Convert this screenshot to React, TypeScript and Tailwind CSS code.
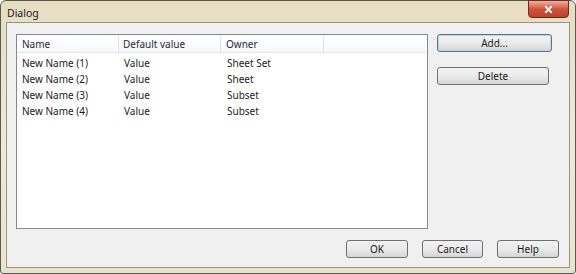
import { X } from "lucide-react";

const rows = [
    { name: "New Name (1)", value: "Value", owner: "Sheet Set" },
    { name: "New Name (2)", value: "Value", owner: "Sheet" },
    { name: "New Name (3)", value: "Value", owner: "Subset" },
    { name: "New Name (4)", value: "Value", owner: "Subset" },
];

const Button = ({ label, className = "" }: { label: string; className?: string }) => (
    <button
        className={`h-[18px] rounded-[3px] border border-[#707070] bg-gradient-to-b from-[#f2f2f2] via-[#ebebeb] to-[#d6d6d6] text-[10px] leading-none text-[#1b1b1b] ${className}`}
    >
        {label}
    </button>
);

export default function App() {
    return (
        <div className="w-[576px] h-[274px] bg-white">
            <div
                className="w-[576px] h-[274px] flex flex-col border border-[#5a5a5a] rounded-t-[6px] rounded-b-[3px] bg-gradient-to-b from-[#e6ddc1] via-[#efe9d6] to-[#ebe3c9] px-[5px] pb-[5px] text-[#1b1b1b]"
                style={{ fontFamily: '"Noto Sans", "Open Sans", sans-serif' }}
            >
                <div className="h-[21px] flex items-start justify-between">
                    <span className="pl-[1px] pt-[6px] text-[10.5px] leading-[12px]">Dialog</span>
                    <div className="mt-[-1px] mr-[1px] w-[41px] h-[18px] rounded-b-[4px] border border-[#6e2a20] bg-gradient-to-b from-[#eeb1a2] via-[#d0543c] to-[#c2402a] flex items-center justify-center">
                        <X size={11} strokeWidth={4} className="text-white" />
                    </div>
                </div>

                <div className="flex-1 flex flex-col border border-[#9c957f] bg-[#f0f0f0] pl-[9px] pr-[10px] pt-[11px] pb-[9px]">
                    <div className="flex-1 flex">
                        <div className="w-[412px] h-[195px] border border-[#828790] bg-white">
                            <div className="h-[18px] flex border-b border-[#e5e5e5] bg-gradient-to-b from-white to-[#f7f8fa] text-[10px] leading-none text-[#1e2a3a]">
                                <div className="w-[102px] pl-[5px] flex items-center border-r border-[#dfe1e5]">Name</div>
                                <div className="w-[102px] pl-[4px] flex items-center border-r border-[#dfe1e5]">Default value</div>
                                <div className="w-[103px] pl-[5px] flex items-center border-r border-[#dfe1e5]">Owner</div>
                                <div className="flex-1" />
                            </div>
                            <div className="pt-[2px]">
                                {rows.map((r) => (
                                    <div key={r.name} className="h-[16px] flex items-center text-[10px] leading-none">
                                        <div className="w-[102px] pl-[5px]">{r.name}</div>
                                        <div className="w-[102px] pl-[5px]">{r.value}</div>
                                        <div className="pl-[6px]">{r.owner}</div>
                                    </div>
                                ))}
                            </div>
                        </div>

                        <div className="ml-[9px] flex flex-col gap-[15px]">
                            <Button
                                label="Add..."
                                className="w-[115px] border-[#3c7fb1] shadow-[inset_0_0_0_1px_#a9dcf5]"
                            />
                            <Button label="Delete" className="w-[112px]" />
                        </div>
                    </div>

                    <div className="flex justify-end gap-[14px]">
                        <Button label="OK" className="w-[62px]" />
                        <Button label="Cancel" className="w-[61px]" />
                        <Button label="Help" className="w-[62px]" />
                    </div>
                </div>
            </div>
        </div>
    );
}
